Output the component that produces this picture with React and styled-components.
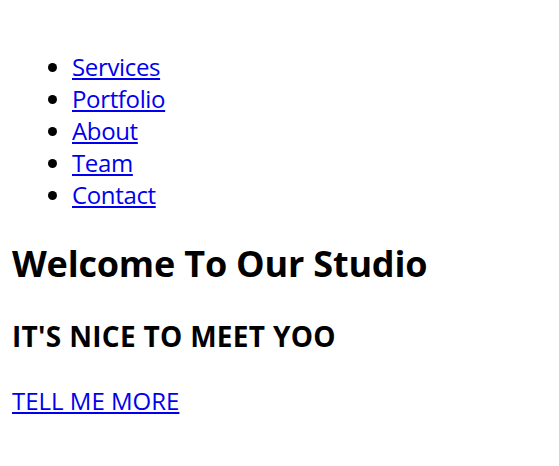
import React from 'react';
import styled, { createGlobalStyle } from 'styled-components';

const GlobalStyle = createGlobalStyle`
  html, body {
    margin: 0;
    padding: 0;
    background: #ffffff;
  }
  body {
    font-family: "Open Sans", "Noto Sans", sans-serif;
    font-size: 24px;
    line-height: 32px;
    color: #000000;
  }
`;

const Page = styled.div`
  padding: 51px 12px 0 12px;
`;

const NavList = styled.ul`
  margin: 0;
  padding-left: 60px;
  list-style: disc;

  > li {
    line-height: 32px;
  }
`;

const NavLink = styled.a`
  color: #0000ee;
  text-decoration: underline;
  text-underline-offset: 2px;
  letter-spacing: -0.35px;
`;

const Hero = styled.section`
  margin-top: 29px;
`;

const Title = styled.h1`
  margin: 0;
  font-size: 36px;
  line-height: 48px;
  font-weight: 700;
  letter-spacing: -0.2px;
`;

const Subtitle = styled.h3`
  margin: 30px 0 0 0;
  font-size: 28px;
  line-height: 37px;
  font-weight: 700;
  letter-spacing: 0.3px;
`;

const MoreLink = styled.a`
  display: inline-block;
  margin-top: 30px;
  color: #0000ee;
  text-decoration: underline;
  text-underline-offset: 2px;
`;

const links = ['Services', 'Portfolio', 'About', 'Team', 'Contact'];

const App = () => {
  return (
    <>
      <GlobalStyle />
      <Page>
        <nav>
          <NavList>
            {links.map((l) => (
              <li key={l}><NavLink href={`#${l.toLowerCase()}`}>{l}</NavLink></li>
            ))}
          </NavList>
        </nav>
        <Hero>
          <Title>Welcome To Our Studio</Title>
          <Subtitle>IT'S NICE TO MEET YOO</Subtitle>
          <MoreLink href="#services">TELL ME MORE</MoreLink>
        </Hero>
      </Page>
    </>
  );
};

export default App;
